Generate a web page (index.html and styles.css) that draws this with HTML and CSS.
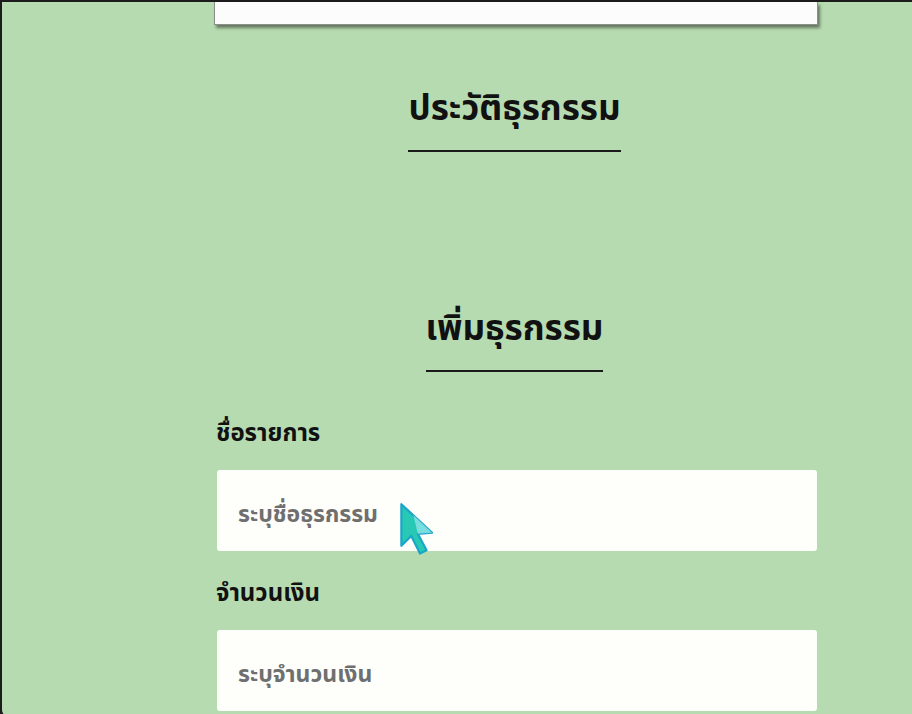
FILE: index.html
```html
<!DOCTYPE html>
<html lang="th">
<head>
<meta charset="utf-8">
<link rel="stylesheet" href="styles.css">
</head>
<body>
<div class="frame">
  <div class="column">
    <div class="card-top"></div>
    <section class="history">
      <h2 class="title">ประวัติธุรกรรม</h2>
    </section>
    <section class="add">
      <h2 class="title">เพิ่มธุรกรรม</h2>
      <form class="form">
        <label class="label" for="name">ชื่อรายการ</label>
        <div class="field-wrap">
          <input class="field" id="name" type="text" placeholder="ระบุชื่อธุรกรรม">
          <svg class="cursor" width="44" height="57" viewBox="0 0 40 52">
            <path d="M3 2 L3 40 L12 31 L20 47 L26 44 L18 29 L31 28 Z" fill="#27c9b4" stroke="#1aa5c9" stroke-width="2" stroke-linejoin="round"/>
            <path d="M14 12 L31 28 L18 29 Z" fill="#8fe4e8" opacity="0.8"/>
          </svg>
        </div>
        <label class="label" for="amount">จำนวนเงิน</label>
        <input class="field" id="amount" type="text" placeholder="ระบุจำนวนเงิน">
      </form>
    </section>
  </div>
</div>
</body>
</html>
```
FILE: styles.css
```css
html, body {
  margin: 0;
  padding: 0;
  height: 100%;
  overflow: hidden;
}
body {
  background: #1c1c1c;
  font-family: "Noto Sans Thai", "Noto Sans", "Loma", sans-serif;
}
.frame {
  box-sizing: border-box;
  height: 714px;
  margin-top: 2px;
  margin-left: 2px;
  background: #b7dbb1;
  overflow: hidden;
  border-bottom-left-radius: 6px;
}
.column {
  width: 601px;
  margin-left: 212px;
  display: flex;
  flex-direction: column;
}
.card-top {
  height: 22px;
  width: 602px;
  background: #fbfcfb;
  border: 1px solid #8a8f8a;
  border-top: none;
  box-shadow: 2px 3px 3px rgba(0,0,0,0.45);
}
.history, .add {
  display: flex;
  flex-direction: column;
  align-items: center;
}
.history {
  padding-top: 60px;
  padding-bottom: 153px;
}
.title {
  margin: 0;
  font-size: 35px;
  font-weight: 700;
  color: #111;
  line-height: 50px;
  padding-bottom: 15px;
  border-bottom: 2px solid #1a1a1a;
}
.form {
  align-self: stretch;
  display: flex;
  flex-direction: column;
  margin-top: 46px;
  margin-left: 3px;
}
.label {
  font-size: 24px;
  font-weight: 700;
  color: #111;
  line-height: 32px;
  margin-bottom: 20px;
  margin-left: -1px;
}
.field-wrap {
  position: relative;
  margin-bottom: 27px;
}
.field {
  box-sizing: border-box;
  width: 600px;
  height: 81px;
  border: none;
  border-radius: 3px;
  background: #fefefa;
  padding: 8px 21px 0;
  font-family: inherit;
  font-size: 23px;
  font-weight: 700;
  outline: none;
}
.field::placeholder {
  color: #6f6f6f;
}
.cursor {
  position: absolute;
  left: 181px;
  top: 32px;
}
```
